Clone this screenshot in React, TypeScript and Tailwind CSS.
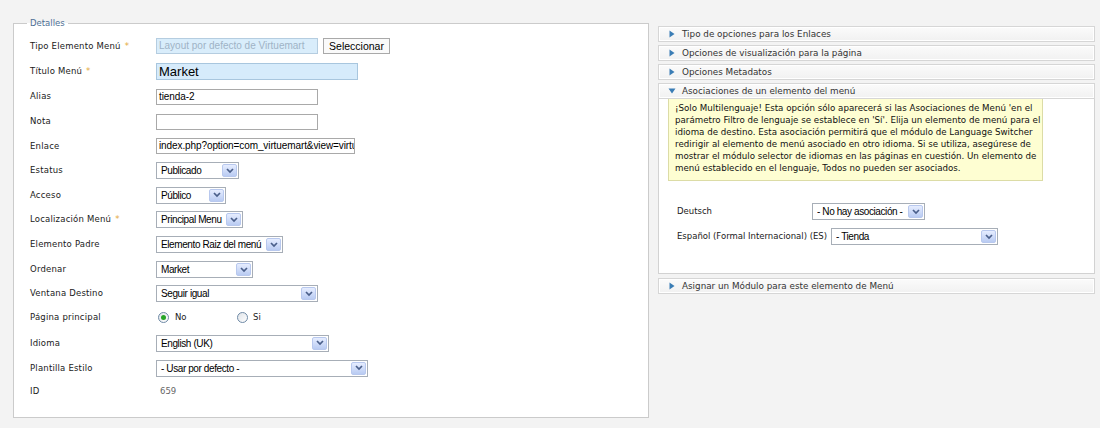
import React from 'react'

const ui = "font-['DejaVu_Sans',sans-serif]"
const ctl = "font-['Liberation_Sans',Arial,sans-serif]"

const Star = () => <span className="ml-[4px] text-[#e3a93c]">*</span>

const Chevron = () => (
  <span className="flex h-[13px] w-[15px] shrink-0 items-center justify-center rounded-[2px] border border-[#b8c8ee] bg-gradient-to-b from-[#e6edff] to-[#b9cbf2]">
    <svg width="8" height="6" viewBox="0 0 8 6">
      <path d="M1 1 L4 4 L7 1" stroke="#4a5f8a" strokeWidth="1.7" fill="none" />
    </svg>
  </span>
)

const Select = ({ className, value }: { className: string; value: string }) => (
  <div className={`flex h-[17px] items-center border border-[#a7aeb7] bg-white pl-[4px] pr-[1px] ${className}`}>
    <span className={`flex-1 overflow-hidden whitespace-nowrap text-[10px] leading-[13px] tracking-[-0.4px] text-black ${ctl}`}>{value}</span>
    <Chevron />
  </div>
)

const TextBox = ({ className, value = '' }: { className: string; value?: string }) => (
  <div className={`flex h-[16px] items-center overflow-hidden whitespace-nowrap border border-[#a9a9a9] bg-white pl-[2px] text-[10px] leading-none tracking-[-0.1px] text-black ${ctl} ${className}`}>
    {value}
  </div>
)

const Radio = ({ on }: { on?: boolean }) => (
  <span className="flex h-[11px] w-[11px] items-center justify-center rounded-full border border-[#6f8aa6] bg-gradient-to-br from-[#dfe3e8] to-white">
    {on && <span className="h-[5px] w-[5px] rounded-full bg-[#26a526]" />}
  </span>
)

const Row = ({ h, label, star, children }: { h: string; label: string; star?: boolean; children?: React.ReactNode }) => (
  <div className={`flex items-center ${h}`}>
    <div className={`w-[126px] shrink-0 text-[8.5px] tracking-[0.2px] text-[#1a1a1a] ${ui}`}>
      {label}
      {star && <Star />}
    </div>
    {children}
  </div>
)

const Arrow = ({ open }: { open?: boolean }) =>
  open ? (
    <svg width="8" height="6" viewBox="0 0 8 6" className="ml-[9px] mr-[6px]">
      <path d="M0.5 0.5 L7.5 0.5 L4 5.5 Z" fill="#3a7db5" />
    </svg>
  ) : (
    <svg width="6" height="8" viewBox="0 0 6 8" className="ml-[10px] mr-[7px]">
      <path d="M0.5 0.5 L5.5 4 L0.5 7.5 Z" fill="#3a7db5" />
    </svg>
  )

const Header = ({ title, open }: { title: string; open?: boolean }) => (
  <div className="flex h-[16px] items-center border border-[#d6d6d6] bg-gradient-to-b from-[#fbfbfb] to-[#f1f1f1] shadow-[inset_0_0_0_1px_#ffffff]">
    <Arrow open={open} />
    <span className={`text-[8.8px] leading-none text-[#333] ${ui}`}>{title}</span>
  </div>
)

export default function App() {
  return (
    <div className="flex min-h-[428px] items-start gap-[9px] bg-[#f3f3f3] pl-[13px] pt-[17px]">
      <fieldset className="w-[636px] border border-[#cbcbcb] bg-white pb-[14px] pl-[16px] pt-[4px]">
        <legend className={`-ml-[3px] px-[3px] text-[8.5px] leading-[12px] text-[#4d6f95] ${ui}`}>Detalles</legend>

        <Row h="h-[26px]" label="Tipo Elemento Menú" star>
          <div className={`flex h-[16px] w-[162px] items-center border border-[#b5cde0] bg-[#d9edfb] pl-[2px] text-[10px] leading-none text-[#9fb3c6] ${ctl}`}>
            Layout por defecto de Virtuemart
          </div>
          <div className={`ml-[5px] flex h-[16px] w-[67px] items-center justify-center border border-[#a9a9a9] bg-[#fafafa] text-[10.5px] leading-none text-black ${ctl}`}>
            Seleccionar
          </div>
        </Row>
        <Row h="h-[25px]" label="Título Menú" star>
          <div className={`flex h-[17px] w-[202px] items-center border border-[#a8c6de] bg-[#d6ebfb] pl-[2px] text-[13px] leading-none text-black ${ctl}`}>
            Market
          </div>
        </Row>
        <Row h="h-[25px]" label="Alias">
          <TextBox className="w-[162px]" value="tienda-2" />
        </Row>
        <Row h="h-[25px]" label="Nota">
          <TextBox className="w-[162px]" />
        </Row>
        <Row h="h-[24px]" label="Enlace">
          <TextBox className="w-[199px]" value="index.php?option=com_virtuemart&view=virtuemart" />
        </Row>
        <Row h="h-[25px]" label="Estatus">
          <Select className="w-[83px]" value="Publicado" />
        </Row>
        <Row h="h-[24px]" label="Acceso">
          <Select className="w-[70px]" value="Público" />
        </Row>
        <Row h="h-[25px]" label="Localización Menú" star>
          <Select className="w-[87px]" value="Principal Menu" />
        </Row>
        <Row h="h-[25px]" label="Elemento Padre">
          <Select className="w-[127px]" value="Elemento Raiz del menú" />
        </Row>
        <Row h="h-[25px]" label="Ordenar">
          <Select className="w-[97px]" value="Market" />
        </Row>
        <Row h="h-[23px]" label="Ventana Destino">
          <Select className="w-[162px]" value="Seguir igual" />
        </Row>
        <Row h="h-[25px]" label="Página principal">
          <div className={`flex items-center text-[8.5px] text-[#1a1a1a] ${ui}`}>
            <span className="ml-[2px]"><Radio on /></span>
            <span className="ml-[6px] w-[62px]">No</span>
            <Radio />
            <span className="ml-[5px]">Si</span>
          </div>
        </Row>
        <Row h="h-[26px]" label="Idioma">
          <Select className="w-[173px]" value="English (UK)" />
        </Row>
        <Row h="h-[24px]" label="Plantilla Estilo">
          <Select className="w-[212px]" value="- Usar por defecto -" />
        </Row>
        <Row h="h-[23px]" label="ID">
          <span className={`ml-[4px] text-[8.5px] text-[#666] ${ui}`}>659</span>
        </Row>
      </fieldset>

      <div className="mt-[9px] flex w-[437px] flex-col">
        <Header title="Tipo de opciones para los Enlaces" />
        <div className="mt-[3px]">
          <Header title="Opciones de visualización para la página" />
        </div>
        <div className="mt-[3px]">
          <Header title="Opciones Metadatos" />
        </div>
        <div className="mt-[3px]">
          <Header title="Asociaciones de un elemento del menú" open />
          <div className="h-[175px] border-x border-b border-[#d2d2d2] bg-white">
            <div className={`ml-[9px] w-[375px] border border-t-0 border-[#dcdca6] bg-[#fefed2] pb-[6px] pl-[6px] pt-[3px] text-[8.7px] leading-[12px] text-[#111] ${ui}`}>
              ¡Solo Multilenguaje! Esta opción sólo aparecerá si las Asociaciones de Menú 'en el
              <br />
              parámetro Filtro de lenguaje se establece en 'Sí'. Elija un elemento de menú para el
              <br />
              idioma de destino. Esta asociación permitirá que el módulo de Language Switcher
              <br />
              redirigir al elemento de menú asociado en otro idioma. Si se utiliza, asegúrese de
              <br />
              mostrar el módulo selector de idiomas en las páginas en cuestión. Un elemento de
              <br />
              menú establecido en el lenguaje, Todos no pueden ser asociados.
            </div>
            <div className={`mt-[18px] pl-[18px] text-[8.5px] text-[#1a1a1a] ${ui}`}>
              <div className="flex h-[25px] items-center">
                <span className="min-w-[135px]">Deutsch</span>
                <Select className="w-[113px]" value="- No hay asociación -" />
              </div>
              <div className="flex h-[25px] items-center">
                <span className="mr-[4px] min-w-[135px]">Español (Formal Internacional) (ES)</span>
                <Select className="w-[167px]" value="- Tienda" />
              </div>
            </div>
          </div>
        </div>
        <div className="mt-[4px]">
          <Header title="Asignar un Módulo para este elemento de Menú" />
        </div>
      </div>
    </div>
  )
}
